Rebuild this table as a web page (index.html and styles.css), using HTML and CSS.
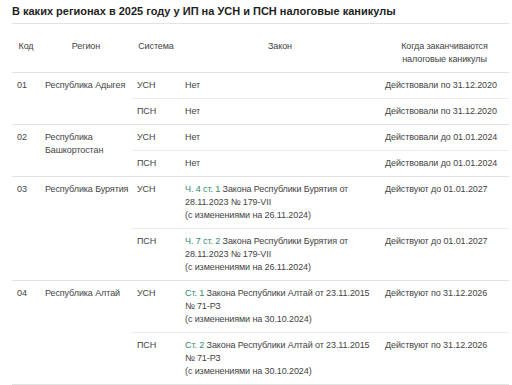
FILE: index.html
```html
<!DOCTYPE html>
<html lang="ru">
<head>
<meta charset="utf-8">
<link rel="stylesheet" href="styles.css">
</head>
<body>
<div class="page">
  <h2 class="title">В каких регионах в 2025 году у ИП на УСН и ПСН налоговые каникулы</h2>
  <table class="tbl">
    <colgroup>
      <col class="c-code"><col class="c-region"><col class="c-sys"><col class="c-law"><col class="c-end">
    </colgroup>
    <thead>
      <tr>
        <th>Код</th>
        <th>Регион</th>
        <th>Система</th>
        <th>Закон</th>
        <th>Когда заканчиваются<br>налоговые каникулы</th>
      </tr>
    </thead>
    <tbody>
      <tr>
        <td rowspan="2">01</td>
        <td rowspan="2">Республика Адыгея</td>
        <td class="sub">УСН</td>
        <td class="sub">Нет</td>
        <td class="sub">Действовали по 31.12.2020</td>
      </tr>
      <tr>
        <td>ПСН</td>
        <td>Нет</td>
        <td>Действовали по 31.12.2020</td>
      </tr>
      <tr>
        <td rowspan="2">02</td>
        <td rowspan="2">Республика<br>Башкортостан</td>
        <td class="sub">УСН</td>
        <td class="sub">Нет</td>
        <td class="sub">Действовали до 01.01.2024</td>
      </tr>
      <tr>
        <td>ПСН</td>
        <td>Нет</td>
        <td>Действовали до 01.01.2024</td>
      </tr>
      <tr>
        <td rowspan="2">03</td>
        <td rowspan="2">Республика Бурятия</td>
        <td class="sub">УСН</td>
        <td class="sub"><a class="lnk">Ч. 4 ст. 1</a> Закона Республики Бурятия от<br>28.11.2023 № 179-VII<br>(с изменениями на 26.11.2024)</td>
        <td class="sub">Действуют до 01.01.2027</td>
      </tr>
      <tr>
        <td>ПСН</td>
        <td><a class="lnk">Ч. 7 ст. 2</a> Закона Республики Бурятия от<br>28.11.2023 № 179-VII<br>(с изменениями на 26.11.2024)</td>
        <td>Действуют до 01.01.2027</td>
      </tr>
      <tr>
        <td rowspan="2">04</td>
        <td rowspan="2">Республика Алтай</td>
        <td class="sub">УСН</td>
        <td class="sub"><a class="lnk">Ст. 1</a> Закона Республики Алтай от 23.11.2015<br>№ 71-РЗ<br>(с изменениями на 30.10.2024)</td>
        <td class="sub">Действуют по 31.12.2026</td>
      </tr>
      <tr>
        <td>ПСН</td>
        <td><a class="lnk">Ст. 2</a> Закона Республики Алтай от 23.11.2015<br>№ 71-РЗ<br>(с изменениями на 30.10.2024)</td>
        <td>Действуют по 31.12.2026</td>
      </tr>
    </tbody>
  </table>
</div>
</body>
</html>
```

FILE: styles.css
```css
html, body {
  margin: 0;
  padding: 0;
  background: #ffffff;
}

.page {
  padding-left: 12px;
  width: 497px;
  font-family: "Liberation Sans", Arial, sans-serif;
  color: #444444;
}

.title {
  margin: 0;
  padding: 3px 0 4px;
  font-size: 11px;
  line-height: 16px;
  font-weight: bold;
  color: #1e1e1e;
  border-bottom: 1px solid #e3e3e3;
  white-space: nowrap;
}

.tbl {
  width: 497px;
  border-collapse: collapse;
  table-layout: fixed;
  font-size: 9px;
  line-height: 13px;
  letter-spacing: -0.1px;
}

.c-code { width: 28px; }
.c-region { width: 92px; }
.c-sys { width: 48px; }
.c-law { width: 200px; }
.c-end { width: 129px; }

.tbl th {
  font-weight: normal;
  text-align: center;
  vertical-align: top;
  padding: 16px 5px 6px;
  color: #444444;
  border-bottom: 1px solid #e3e3e3;
}

.tbl td {
  text-align: left;
  vertical-align: top;
  padding: 6px 5px 6px 5px;
  border-bottom: 1px solid #e3e3e3;
  white-space: nowrap;
}

.tbl td.sub {
  border-bottom: 1px solid #ececec;
}

.lnk {
  color: #2f8a6f;
  text-decoration: none;
}
```
